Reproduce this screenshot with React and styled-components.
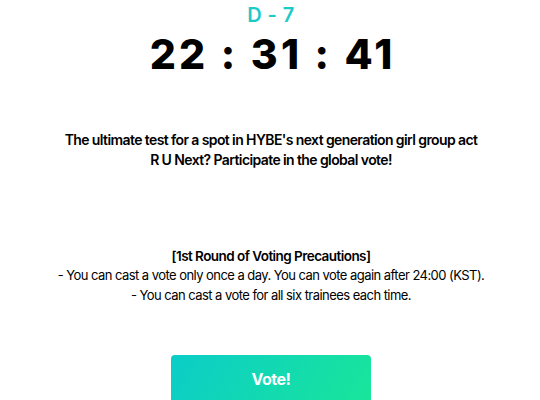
import React from "react";
import styled, { createGlobalStyle } from "styled-components";

const GlobalStyle = createGlobalStyle`
  body {
    margin: 0;
    background: #fff;
    font-family: Inter, "Noto Sans", sans-serif;
    color: #000;
  }
`;

const Page = styled.main`
  display: flex;
  flex-direction: column;
  align-items: center;
  padding: 3px 0 0 2px;
  text-align: center;
`;

const DDay = styled.div`
  color: #1ccac8;
  font-size: 20px;
  font-weight: 600;
  line-height: 24px;
  letter-spacing: 0.02em;
`;

const Timer = styled.div`
  margin-top: 2px;
  font-size: 41px;
  font-weight: 800;
  line-height: 50px;
  letter-spacing: 0.08em;
  margin-right: -0.08em;
`;

const Intro = styled.p`
  margin: 51px 0 0;
  font-size: 14px;
  font-weight: 600;
  line-height: 19.5px;
  letter-spacing: -0.6px;
`;

const Notice = styled.div`
  margin-top: 78px;
  font-size: 13px;
  line-height: 19.3px;
  letter-spacing: -0.55px;

  strong {
    display: block;
    font-size: 13.5px;
    font-weight: 600;
  }
`;

const VoteButton = styled.button`
  margin-top: 50px;
  width: 200px;
  height: 48px;
  border: 0;
  border-radius: 4px;
  background: linear-gradient(120deg, #0bcdc8 0%, #1ae59a 100%);
  color: #fff;
  font-family: inherit;
  font-size: 16px;
  font-weight: 700;
  letter-spacing: -0.5px;
  cursor: pointer;
`;

function App() {
  return (
    <Page>
      <GlobalStyle />
      <DDay>D - 7</DDay>
      <Timer>22 : 31 : 41</Timer>

      <Intro>
        The ultimate test for a spot in HYBE's next generation girl group act
        <br />
        R U Next? Participate in the global vote!
      </Intro>

      <Notice>
        <strong>[1st Round of Voting Precautions]</strong>
        - You can cast a vote only once a day. You can vote again after 24:00 (KST).
        <br />
        - You can cast a vote for all six trainees each time.
      </Notice>

      <VoteButton>Vote!</VoteButton>
    </Page>
  );
}

export default App;
